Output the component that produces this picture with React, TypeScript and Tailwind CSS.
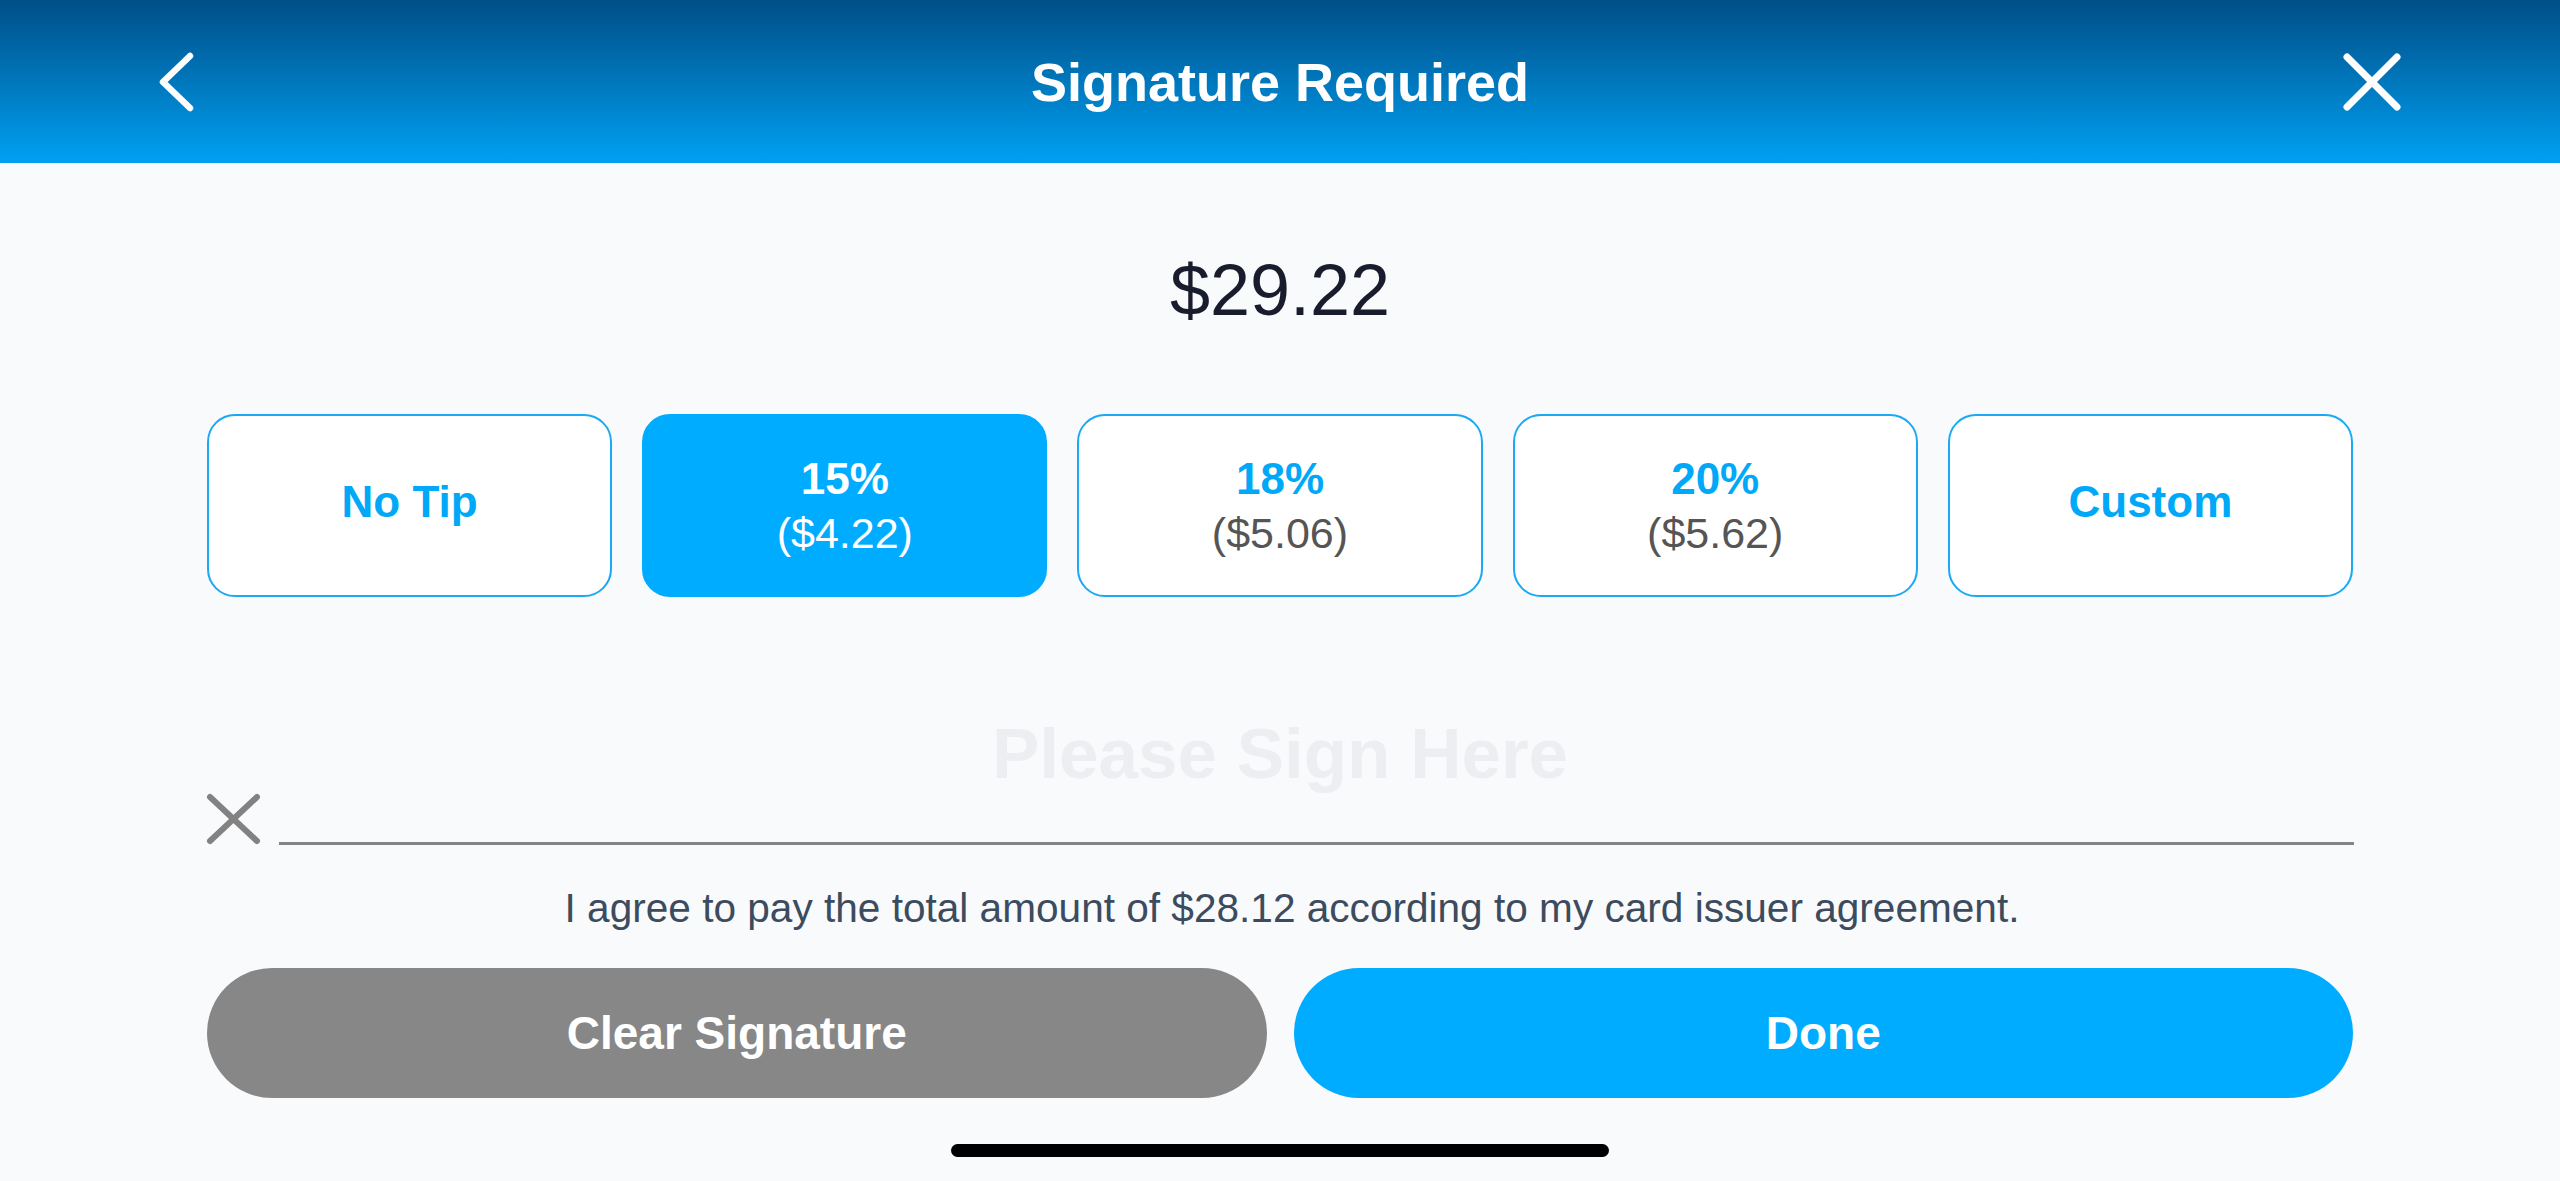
import React from "react";

const tips = [
  { label: "No Tip" },
  { label: "15%", amount: "($4.22)", selected: true },
  { label: "18%", amount: "($5.06)" },
  { label: "20%", amount: "($5.62)" },
  { label: "Custom" },
];

export default function App() {
  return (
    <div
      className="w-full h-[1181px] bg-[#f8fafc] flex flex-col overflow-hidden"
      style={{ fontFamily: '"Liberation Sans", Arial, sans-serif' }}
    >
      {/* Header */}
      <header className="h-[163px] shrink-0 bg-gradient-to-b from-[#004f88] to-[#00a1f3] flex items-center justify-between px-[158px]">
        <div className="w-[70px] flex items-center justify-start">
          <svg width="36" height="60" viewBox="0 0 36 60" fill="none">
            <polyline
              points="32,4 5,30 32,56"
              stroke="white"
              strokeWidth="6.5"
              strokeLinecap="round"
              strokeLinejoin="round"
            />
          </svg>
        </div>
        <h1 className="text-white font-bold text-[54px] leading-none">Signature Required</h1>
        <div className="w-[70px] flex items-center justify-end">
          <svg width="60" height="58" viewBox="0 0 60 58" fill="none">
            <line x1="5" y1="4" x2="55" y2="54" stroke="white" strokeWidth="7" strokeLinecap="round" />
            <line x1="55" y1="4" x2="5" y2="54" stroke="white" strokeWidth="7" strokeLinecap="round" />
          </svg>
        </div>
      </header>

      {/* Amount */}
      <div className="mt-[91px] text-center text-[72px] leading-[72px] text-[#191c2c]">$29.22</div>

      {/* Tips */}
      <div className="mt-[88px] px-[207px] grid grid-cols-5 gap-[30px]">
        {tips.map((t) => (
          <div
            key={t.label}
            className={
              t.selected
                ? "h-[183px] rounded-[28px] bg-[#00acff] border-2 border-[#00acff] flex flex-col items-center justify-center"
                : "h-[183px] rounded-[28px] bg-white border-2 border-[#1aa9f5] flex flex-col items-center justify-center"
            }
          >
            {t.amount ? (
              <>
                <span
                  className={
                    t.selected
                      ? "text-white font-bold text-[44px] leading-[54px]"
                      : "text-[#00a9f7] font-bold text-[44px] leading-[54px]"
                  }
                >
                  {t.label}
                </span>
                <span
                  className={
                    t.selected
                      ? "text-white text-[43px] leading-[54px]"
                      : "text-[#555555] text-[43px] leading-[54px]"
                  }
                >
                  {t.amount}
                </span>
              </>
            ) : (
              <span className="text-[#00a9f7] font-bold text-[44px] leading-[54px] pb-[7px]">{t.label}</span>
            )}
          </div>
        ))}
      </div>

      {/* Please sign here */}
      <div className="mt-[121px] text-center font-bold text-[71px] leading-[71px] text-[#eceef1]">
        Please Sign Here
      </div>

      {/* Signature line */}
      <div className="mt-[4px] px-[206px] flex items-end">
        <svg width="55" height="52" viewBox="0 0 55 52" fill="none" className="shrink-0">
          <line x1="4" y1="4" x2="51" y2="48" stroke="#828282" strokeWidth="6" strokeLinecap="round" />
          <line x1="51" y1="4" x2="4" y2="48" stroke="#828282" strokeWidth="6" strokeLinecap="round" />
        </svg>
        <div className="ml-[18px] flex-1 h-[3px] bg-[#858585]" />
      </div>

      {/* Agreement */}
      <p className="mt-[43px] pl-[24px] text-center text-[40.6px] leading-[40px] text-[#3c4b5e]">
        I agree to pay the total amount of $28.12 according to my card issuer agreement.
      </p>

      {/* Buttons */}
      <div className="mt-[40px] px-[207px] grid grid-cols-2 gap-[27px]">
        <button className="h-[130px] rounded-full bg-[#878787] text-white font-bold text-[46px]">
          Clear Signature
        </button>
        <button className="h-[130px] rounded-full bg-[#00acff] text-white font-bold text-[46px]">
          Done
        </button>
      </div>

      {/* Home indicator */}
      <div className="mt-[46px] flex justify-center">
        <div className="w-[658px] h-[13px] rounded-full bg-black" />
      </div>
    </div>
  );
}
